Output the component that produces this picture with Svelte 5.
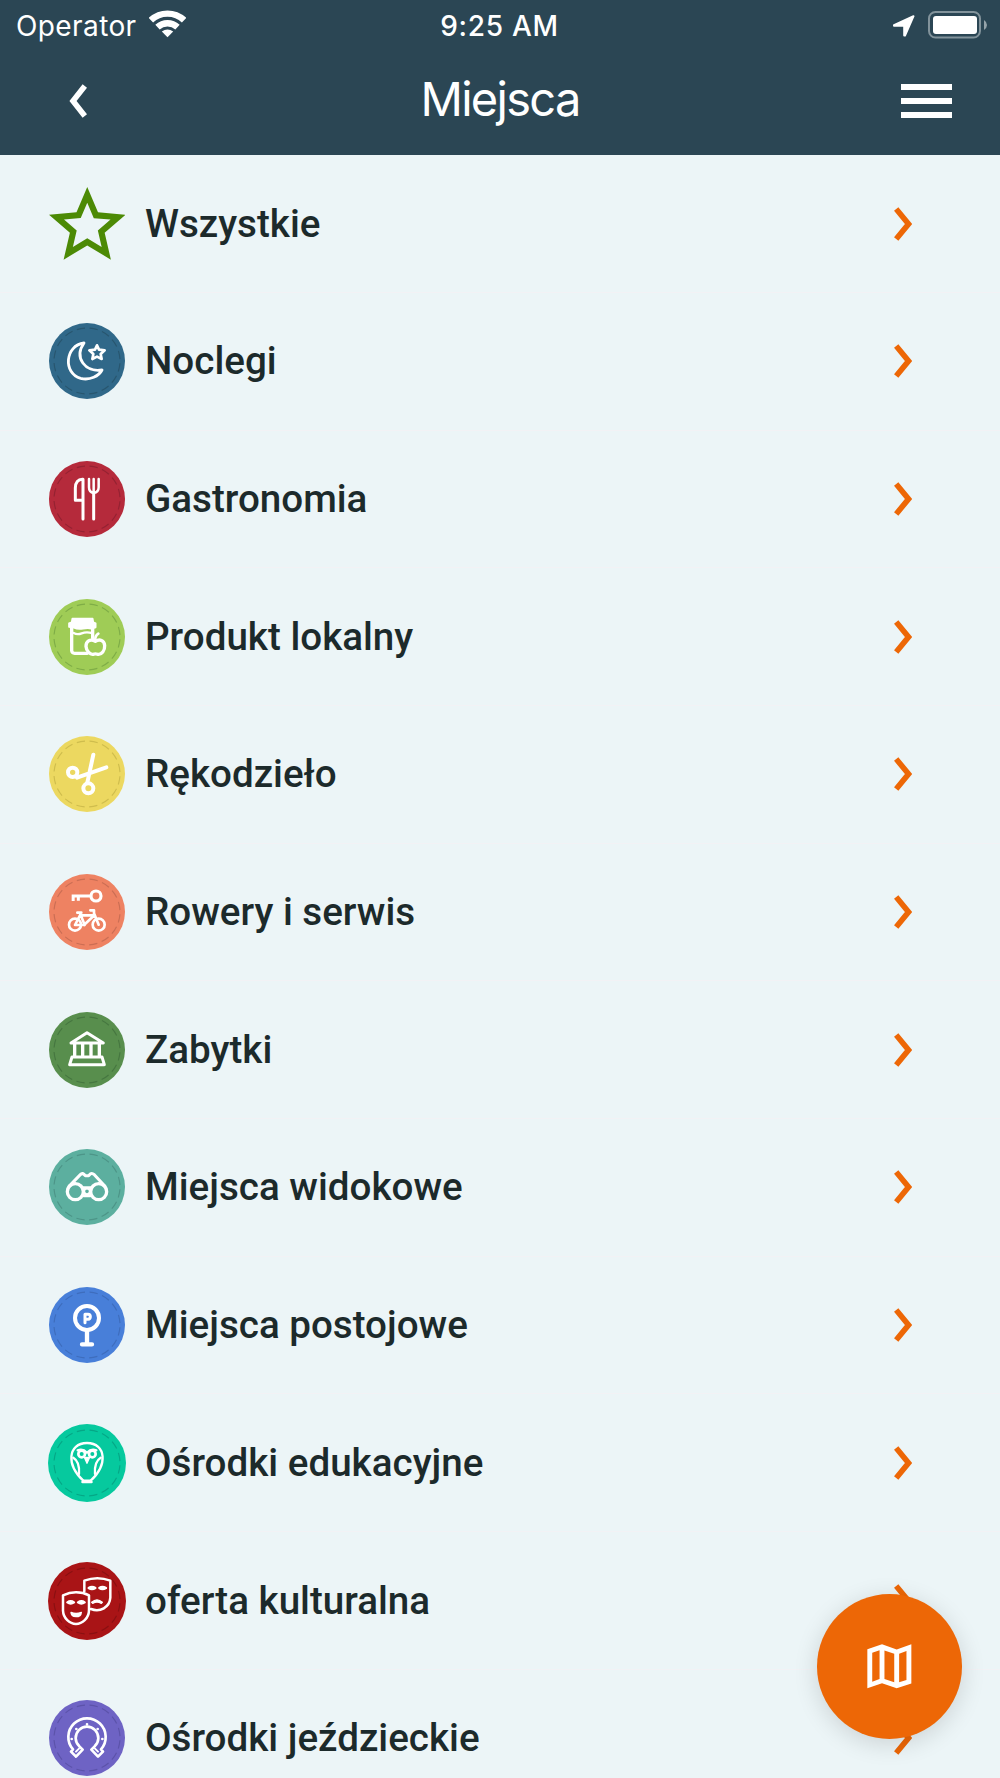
<script>
  // Each badge lists its centre (cx, cy) and radius in the units its glyph is drawn in.
  const places = [
    { name: 'Wszystkie', star: true },
    {
      name: 'Noclegi', color: '#306889', stitch: '#28566f', cx: 171, cy: 575, r: 114, w: 8.5,
      glyph: '<path d="M162 521C105 528 98 612 152 627C180 634 207 620 216 602C166 610 131 565 162 521Z"/><path stroke-width="8" d="M201 528L207 541L224 543L212 554L215 569L201 562L187 569L190 554L178 543L195 541Z"/>'
    },
    {
      name: 'Gastronomia', color: '#b52a3b', stitch: '#952232', cx: 141, cy: 147, r: 114, w: 9,
      glyph: '<path d="M129 207V88C114 87 106 97 106 114V151H127"/><path stroke-width="7.5" d="M147 87V112Q147 127 161 129Q176 127 176 112V87M161 87V126"/><path d="M161 126V207"/>'
    },
    {
      name: 'Produkt lokalny', color: '#9fcc56', stitch: '#7fad47', cx: 141, cy: 141, r: 114, w: 10,
      glyph: '<path fill="#fff" stroke-width="5" d="M97 86H158L160 97L167 100V112L154 116Q145 113 129 116Q113 119 102 113L87 111V100L95 97Z"/><path d="M95 114V182Q96 190 104 190H142M158 115V145"/><path stroke-width="7" d="M101 129Q112 135 125 130T156 129"/><path fill="#9fcc56" d="M166 154C149 145 138 155 138 169C139 184 151 195 160 193Q166 190 173 193C185 195 195 181 194 167C193 151 179 146 166 154Z"/><path stroke-width="8" d="M166 153Q164 138 175 131"/>'
    },
    {
      name: 'Rękodzieło', color: '#ecd860', stitch: '#cfbd4d', cx: 141, cy: 143, r: 114, w: 12,
      glyph: '<circle cx="98" cy="138" r="14"/><circle cx="145" cy="186" r="15"/><path d="M160 85L142 169M199 123L111 154"/>'
    },
    {
      name: 'Rowery i serwis', color: '#ee8262', stitch: '#cb6e54', cx: 141, cy: 145, r: 114, w: 8,
      glyph: '<circle cx="168" cy="97" r="15" stroke-width="9.5"/><path stroke-width="9" stroke-linecap="butt" d="M152 97H95M99.5 97V112M115 97V111"/><circle cx="105" cy="183" r="18"/><circle cx="176" cy="183" r="18"/><path d="M112 147H124M151 140H162V149L176 183M163 155L132 184H105L120 155H162M120 149L134 184"/>'
    },
    {
      name: 'Zabytki', color: '#588e4d', stitch: '#467740', cx: 141, cy: 150, r: 114, w: 9,
      glyph: '<path d="M93 129L141 98L190 129Z"/><path d="M104 132V169M128 132V167M153 132V167M178 132V169" stroke-width="10"/><path d="M96 171H186L193 194H89Z"/>'
    },
    {
      name: 'Miejsca widokowe', color: '#5caf9f', stitch: '#4d9588', cx: 141, cy: 564, r: 114, w: 10,
      glyph: '<circle cx="106" cy="578" r="24"/><circle cx="176" cy="578" r="24"/><circle cx="141" cy="577" r="9" stroke-width="7"/><path d="M87 562L121 527Q127 521 132 526L136 530H146L151 525Q156 521 163 527L195 562M130 566H152M131 590H151" stroke-width="9"/>'
    },
    {
      name: 'Miejsca postojowe', color: '#487fd9', stitch: '#3e6dbd', cx: 141, cy: 165, r: 114, w: 12,
      glyph: '<circle cx="141" cy="144" r="36"/><path stroke-width="13" d="M141 182V221M126 223H156"/><path stroke-width="9" d="M135 158V133H144Q151 133 151 140T144 148H135"/>'
    },
    {
      name: 'Ośrodki edukacyjne', color: '#06c99e', stitch: '#05a786', cx: 141, cy: 579, r: 117, w: 7,
      glyph: '<path d="M130 632C78 588 83 519 141 519S204 588 152 632"/><path fill="#fff" d="M127 636H155L151 632H131Z"/><circle cx="125" cy="552" r="10" stroke-width="8"/><circle cx="157" cy="552" r="10" stroke-width="8"/><path d="M113 541Q129 535 141 548Q153 535 169 541"/><path fill="#fff" stroke-width="4" d="M133 562H149L141 580Z"/><path d="M100 563Q120 575 117 612M182 563Q162 575 165 612"/>'
    },
    {
      name: 'oferta kulturalna', color: '#a91416', stitch: '#8a1012', cx: 141, cy: 152, r: 117, w: 7.5,
      glyph: '<path d="M133 123V91Q172 76 211 91V142C209 171 180 187 153 176M108 126Q130 126 147 135V181C146 204 127 221 108 221S70 204 69 181V135Q88 126 108 126Z"/><path stroke-width="7" d="M146 113Q156 106 166 113Q156 120 146 113ZM178 113Q187 106 198 113Q187 120 178 113ZM82 156Q92 149 102 156Q92 163 82 156ZM114 156Q124 149 134 156Q124 163 114 156Z"/><path d="M155 156Q171 141 187 156L184 159Q171 151 158 159ZM93 186Q108 193 124 186Q123 199 108 199T93 186Z" fill="#fff" stroke-width="4"/>'
    },
    {
      name: 'Ośrodki jeździeckie', color: '#6e63c4', stitch: '#5c53aa', cx: 141, cy: 565, r: 114, w: 8,
      glyph: '<path d="M99 599A56 56 0 1 1 183 599L189 606L174 621L154 600L164 590A34 34 0 1 0 118 590L128 600L108 621L93 606Z"/><path stroke-width="6" d="M108 606L117 597M174 606L165 597"/><path stroke-width="8" d="M95 568h.1M109 538h.1M141 524h.1M173 538h.1M187 568h.1"/>'
    }
  ];
</script>

<div class="screen">
  <header>
    <div class="status">
      <div class="carrier">
        <span>Operator</span>
        <svg class="wifi" viewBox="0 0 37 28">
          <g fill="none" stroke="#fff" stroke-width="6.4">
            <path d="M1.9 10.2A24.2 24.2 0 0 1 35.1 10.2" />
            <path d="M8.5 17.2A14.7 14.7 0 0 1 28.5 17.2" />
          </g>
          <path fill="#fff" d="M18.5 27.2L12.8 21.5Q18.5 17.4 24.2 21.5Z" />
        </svg>
      </div>
      <span class="clock">9:25 AM</span>
      <div class="indicators">
        <svg class="location" viewBox="0 0 22 22">
          <path fill="#fff" stroke="#fff" stroke-width="2" stroke-linejoin="round" d="M1 10.2L20.5 1.2L12 20.5H11.2V10.8H1Z" />
        </svg>
        <svg class="battery" viewBox="0 0 59 28">
          <rect x="1" y="1" width="51" height="25.5" rx="6.5" fill="none" stroke="#82939b" stroke-width="2" />
          <rect x="5" y="5" width="44" height="18" rx="3" fill="#fff" />
          <path d="M56 9V19Q59 17 59 14T56 9Z" fill="#95a3aa" />
        </svg>
      </div>
    </div>
    <nav>
      <svg class="back" viewBox="0 0 18 34">
        <path fill="none" stroke="#fff" stroke-width="5.6" d="M15.8 2L4 17L15.8 32" />
      </svg>
      <h1>Miejsca</h1>
      <div class="burger"><i></i><i></i><i></i></div>
    </nav>
  </header>

  <ul>
    {#each places as place}
      <li>
        <div class="icon">
          {#if place.star}
            <svg class="star" viewBox="2 2 20 19">
              <path fill="#4c8a05" d="M22 9.24l-7.19-.62L12 2 9.19 8.63 2 9.24l5.46 4.73L5.82 21 12 17.27 18.18 21l-1.63-7.03L22 9.24zM12 15.4l-3.76 2.27 1-4.28-3.32-2.88 4.38-.38L12 6.1l1.71 4.04 4.38.38-3.32 2.88 1 4.28L12 15.4z" />
            </svg>
          {:else}
            <svg class="badge" class:large={place.r > 114} viewBox="{place.cx - place.r} {place.cy - place.r} {place.r * 2} {place.r * 2}">
              <circle cx={place.cx} cy={place.cy} r={place.r} fill={place.color} />
              <circle class="stitch" cx={place.cx} cy={place.cy} r="99" stroke={place.stitch} />
              <g class="glyph" stroke-width={place.w}>{@html place.glyph}</g>
            </svg>
          {/if}
        </div>
        <span class="name">{place.name}</span>
        <svg class="chevron" viewBox="0 0 18 34">
          <path d="M2.2 2L14.5 17L2.2 32" />
        </svg>
      </li>
    {/each}
  </ul>

  <div class="fab">
    <svg viewBox="0 0 24 24">
      <path fill="#fff" fill-rule="evenodd" d="M3 5L9 3L15 5.1L21 3V19L15 21L9 18.9L3 21ZM5 6.46V18.3L8 17.15V5.45ZM10 5.47V17.13L14 18.53V6.87ZM16 6.86V18.55L19 17.54V5.7Z" />
    </svg>
  </div>
</div>

<style>
  :global(body) {
    margin: 0;
  }
  .screen {
    position: relative;
    width: 1000px;
    height: 1778px;
    overflow: hidden;
    background: #ecf5f7;
    font-family: Roboto, sans-serif;
  }
  svg {
    display: block;
    flex: none;
  }
  header {
    box-sizing: border-box;
    height: 154.7px;
    background: #2b4654;
    color: #fff;
    font-family: Inter, sans-serif;
  }
  .status {
    display: grid;
    grid-template-columns: 1fr auto 1fr;
    align-items: center;
    height: 51px;
    padding: 0 13px 0 16px;
    font-size: 28px;
  }
  .carrier,
  .indicators {
    display: flex;
    align-items: center;
  }
  .carrier {
    gap: 12px;
    letter-spacing: 0.4px;
  }
  .indicators {
    justify-content: flex-end;
    gap: 13px;
  }
  .wifi {
    width: 37px;
    height: 28px;
    margin-top: -3px;
  }
  .clock {
    margin: 0 2px 0 -2px;
    font-weight: 500;
    letter-spacing: 0.7px;
  }
  .location {
    width: 22px;
    height: 22px;
  }
  .battery {
    width: 59px;
    height: 28px;
    margin-top: -2px;
  }
  nav {
    display: grid;
    grid-template-columns: 1fr auto 1fr;
    align-items: center;
    height: 100px;
    padding: 0 48px;
  }
  .back {
    width: 18px;
    height: 34px;
    margin-left: 21px;
  }
  h1 {
    margin: -4px 0 0;
    font-size: 47px;
    font-weight: 400;
    line-height: 60px;
    letter-spacing: -1.7px;
  }
  .burger {
    display: grid;
    gap: 7.8px;
    justify-self: end;
    width: 51px;
  }
  .burger i {
    height: 6px;
    background: #fff;
  }
  ul {
    margin: 0;
    padding: 0.6px 0 0;
    list-style: none;
  }
  li {
    display: flex;
    align-items: center;
    box-sizing: border-box;
    height: 137.7px;
    padding: 0 88px 0 47px;
    border-bottom: 1px solid #f2f2f5;
  }
  .icon {
    display: flex;
    justify-content: center;
    width: 80px;
    margin-right: 18px;
  }
  .star {
    width: 76.5px;
    height: 72.7px;
  }
  .badge {
    width: 76px;
    height: 76px;
  }
  .badge.large {
    width: 78px;
    height: 78px;
  }
  .stitch {
    fill: none;
    stroke-width: 3.5;
    stroke-dasharray: 25 13.88;
    stroke-dashoffset: -7;
  }
  .glyph {
    fill: none;
    stroke: #fff;
    stroke-linecap: round;
    stroke-linejoin: round;
  }
  .name {
    flex: 1;
    color: #1c2a2b;
    font-size: 38.6px;
    font-weight: 500;
    line-height: 50px;
    white-space: nowrap;
  }
  .chevron {
    width: 18px;
    height: 34px;
  }
  .chevron path {
    fill: none;
    stroke: #ed6706;
    stroke-width: 5.6;
  }
  .fab {
    position: absolute;
    top: 1594px;
    left: 816.5px;
    display: flex;
    align-items: center;
    justify-content: center;
    width: 145px;
    height: 145px;
    border-radius: 50%;
    background: #ed6706;
    box-shadow: 0 5px 24px rgba(0, 0, 0, 0.14);
  }
  .fab svg {
    width: 58.7px;
    height: 58.7px;
  }
</style>
